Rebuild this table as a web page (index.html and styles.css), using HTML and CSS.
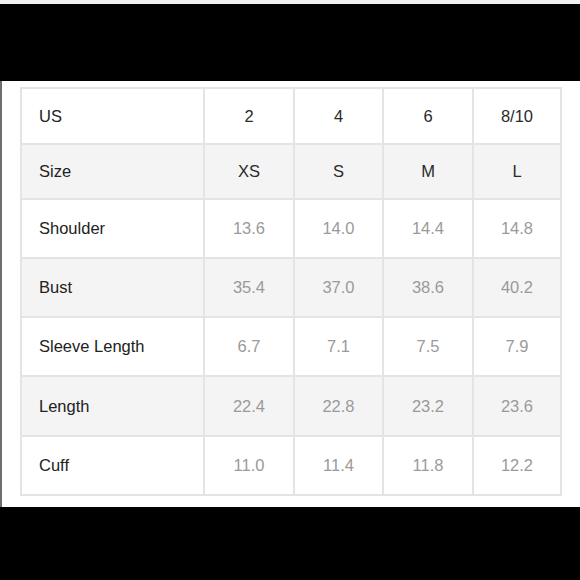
FILE: index.html
```html
<!DOCTYPE html>
<html>
<head>
<meta charset="utf-8">
<link rel="stylesheet" href="styles.css">
</head>
<body>
<div class="strip"></div>
<div class="bar bar-top"></div>
<main class="sheet">
  <div class="chart">
    <div class="cell label">US</div><div class="cell head">2</div><div class="cell head">4</div><div class="cell head">6</div><div class="cell head">8/10</div>
    <div class="cell label alt">Size</div><div class="cell head alt">XS</div><div class="cell head alt">S</div><div class="cell head alt">M</div><div class="cell head alt">L</div>
    <div class="cell label">Shoulder</div><div class="cell val">13.6</div><div class="cell val">14.0</div><div class="cell val">14.4</div><div class="cell val">14.8</div>
    <div class="cell label alt">Bust</div><div class="cell val alt">35.4</div><div class="cell val alt">37.0</div><div class="cell val alt">38.6</div><div class="cell val alt">40.2</div>
    <div class="cell label">Sleeve Length</div><div class="cell val">6.7</div><div class="cell val">7.1</div><div class="cell val">7.5</div><div class="cell val">7.9</div>
    <div class="cell label alt">Length</div><div class="cell val alt">22.4</div><div class="cell val alt">22.8</div><div class="cell val alt">23.2</div><div class="cell val alt">23.6</div>
    <div class="cell label">Cuff</div><div class="cell val">11.0</div><div class="cell val">11.4</div><div class="cell val">11.8</div><div class="cell val">12.2</div>
  </div>
</main>
<div class="bar bar-bottom"></div>
</body>
</html>
```
FILE: styles.css
```css
html, body {
  margin: 0;
  padding: 0;
  background: #000;
}
body {
  width: 580px;
  height: 580px;
  overflow: hidden;
  font-family: "Liberation Sans", Arial, sans-serif;
}
.strip {
  height: 4px;
  background: #f3f0f0;
}
.bar-top {
  height: 77px;
  background: #000;
}
.bar-bottom {
  height: 73px;
  background: #000;
}
.sheet {
  height: 426px;
  box-sizing: border-box;
  background: #fff;
  border-left: 2px solid #6e6e6e;
  padding: 6px 0 0 18px;
}
.chart {
  display: grid;
  grid-template-columns: 181px 88px 87px 88px 86px;
  grid-template-rows: 54px 53px 57px 57px 57px 58px 57px;
  gap: 2px;
  padding: 2px;
  background: #e4e4e4;
  width: max-content;
}
.cell {
  background: #fff;
  display: flex;
  align-items: center;
  justify-content: center;
  font-size: 16.5px;
  color: #2a2a2a;
}
.cell.alt {
  background: #f4f4f4;
}
.label {
  justify-content: flex-start;
  padding-left: 17px;
  color: #222;
}
.val {
  color: #9a9a9a;
}
```
